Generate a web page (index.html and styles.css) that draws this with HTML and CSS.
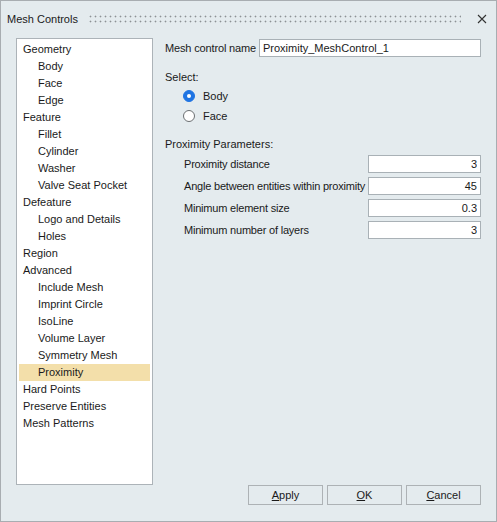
FILE: index.html
```html
<!DOCTYPE html>
<html lang="en">
<head>
    <meta charset="UTF-8">
    <title>Mesh Controls</title>
    <link rel="stylesheet" href="styles.css">
</head>
<body>
    <div class="window">
        <div class="titlebar">
            <span class="title">Mesh Controls</span>
            <div class="grip"></div>
            <svg class="close" width="10" height="10" viewBox="0 0 10 10">
                <path d="M1 1 L9 9 M9 1 L1 9" stroke="#333" stroke-width="1.1" fill="none"/>
            </svg>
        </div>

        <div class="content">
            <!-- Tree -->
            <div class="tree">
                <div class="node">Geometry</div>
                <div class="node child">Body</div>
                <div class="node child">Face</div>
                <div class="node child">Edge</div>
                <div class="node">Feature</div>
                <div class="node child">Fillet</div>
                <div class="node child">Cylinder</div>
                <div class="node child">Washer</div>
                <div class="node child">Valve Seat Pocket</div>
                <div class="node">Defeature</div>
                <div class="node child">Logo and Details</div>
                <div class="node child">Holes</div>
                <div class="node">Region</div>
                <div class="node">Advanced</div>
                <div class="node child">Include Mesh</div>
                <div class="node child">Imprint Circle</div>
                <div class="node child">IsoLine</div>
                <div class="node child">Volume Layer</div>
                <div class="node child">Symmetry Mesh</div>
                <div class="node child selected">Proximity</div>
                <div class="node">Hard Points</div>
                <div class="node">Preserve Entities</div>
                <div class="node">Mesh Patterns</div>
            </div>

            <!-- Form -->
            <div class="form">
                <div class="name-row">
                    <label>Mesh control name</label>
                    <input class="field name-field" type="text" value="Proximity_MeshControl_1">
                </div>

                <div class="section-label">Select:</div>
                <div class="radio-row first"><span class="radio checked"></span>Body</div>
                <div class="radio-row"><span class="radio"></span>Face</div>

                <div class="section-label params-label">Proximity Parameters:</div>
                <div class="param-row">
                    <span>Proximity distance</span>
                    <input class="field num" type="text" value="3">
                </div>
                <div class="param-row">
                    <span>Angle between entities within proximity</span>
                    <input class="field num" type="text" value="45">
                </div>
                <div class="param-row">
                    <span>Minimum element size</span>
                    <input class="field num" type="text" value="0.3">
                </div>
                <div class="param-row">
                    <span>Minimum number of layers</span>
                    <input class="field num" type="text" value="3">
                </div>

                <div class="buttons">
                    <button class="btn"><u>A</u>pply</button>
                    <button class="btn"><u>O</u>K</button>
                    <button class="btn"><u>C</u>ancel</button>
                </div>
            </div>
        </div>
    </div>
</body>
</html>
```

FILE: styles.css
```css
body {
    margin: 0;
    font-family: "Liberation Sans", Arial, sans-serif;
    font-size: 11px;
    color: #1a1a1a;
}
.window {
    width: 497px;
    height: 522px;
    box-sizing: border-box;
    border: 1px solid #a8adb1;
    background-color: #e4ebee;
    display: flex;
    flex-direction: column;
}
.titlebar {
    height: 36px;
    display: flex;
    align-items: center;
    padding: 0 9px 0 6px;
    box-sizing: border-box;
}
.title {
    color: #1a1a1a;
    font-size: 11px;
}
.grip {
    flex: 1;
    height: 8px;
    margin: 0 16px 0 10px;
    background-image: radial-gradient(circle, #8d9194 0.8px, transparent 1.1px);
    background-size: 5px 5px;
    background-position: 0 -1px;
}
.close {
    display: block;
}
.content {
    flex: 1;
    display: flex;
    padding: 1px 15px 15px 15px;
}
.tree {
    width: 137px;
    height: 447px;
    box-sizing: border-box;
    background: #fff;
    border: 1px solid #acb3b8;
    padding: 2px 2px 0 2px;
}
.node {
    height: 17px;
    line-height: 17px;
    padding-left: 4px;
    white-space: nowrap;
}
.node.child {
    padding-left: 19px;
}
.node.selected {
    background-color: #f3dfaa;
}
.form {
    flex: 1;
    margin-left: 12px;
    display: flex;
    flex-direction: column;
}
.name-row {
    display: flex;
    align-items: center;
    height: 19px;
}
.name-row label {
    width: 94px;
    letter-spacing: -0.15px;
    white-space: nowrap;
}
.field {
    box-sizing: border-box;
    height: 18px;
    border: 1px solid #a9b1b6;
    background: #fff;
    font-family: inherit;
    font-size: 11px;
    color: #1a1a1a;
    padding: 0 3px;
    margin: 0;
    outline: none;
}
.name-field {
    flex: 1;
}
.num {
    width: 113px;
    flex-shrink: 0;
    text-align: right;
}
.section-label {
    margin-top: 13px;
    height: 14px;
    line-height: 14px;
}
.radio-row {
    display: flex;
    align-items: center;
    height: 20px;
    padding-left: 18px;
}
.radio-row.first {
    margin-top: 2px;
}
.radio {
    width: 12px;
    height: 12px;
    box-sizing: border-box;
    border-radius: 50%;
    border: 1px solid #6b6f72;
    background: #fff;
    margin-right: 8px;
    position: relative;
}
.radio.checked {
    background: #1f74e3;
    border-color: #1f74e3;
}
.radio.checked::after {
    content: "";
    position: absolute;
    left: 3px;
    top: 3px;
    width: 4px;
    height: 4px;
    border-radius: 50%;
    background: #fff;
}
.params-label {
    margin-top: 11px;
}
.param-row {
    display: flex;
    align-items: center;
    justify-content: space-between;
    padding-left: 19px;
    height: 18px;
    margin-top: 4px;
}
.param-row span {
    white-space: nowrap;
    letter-spacing: -0.2px;
}
.buttons {
    margin-top: auto;
    display: flex;
    justify-content: flex-end;
    gap: 4px;
    margin-bottom: 1px;
}
.btn {
    width: 75px;
    height: 20px;
    box-sizing: border-box;
    border: 1px solid #adb2b5;
    background: #e4ebee;
    font-family: inherit;
    font-size: 11px;
    color: #1a1a1a;
    padding: 0;
}
```
